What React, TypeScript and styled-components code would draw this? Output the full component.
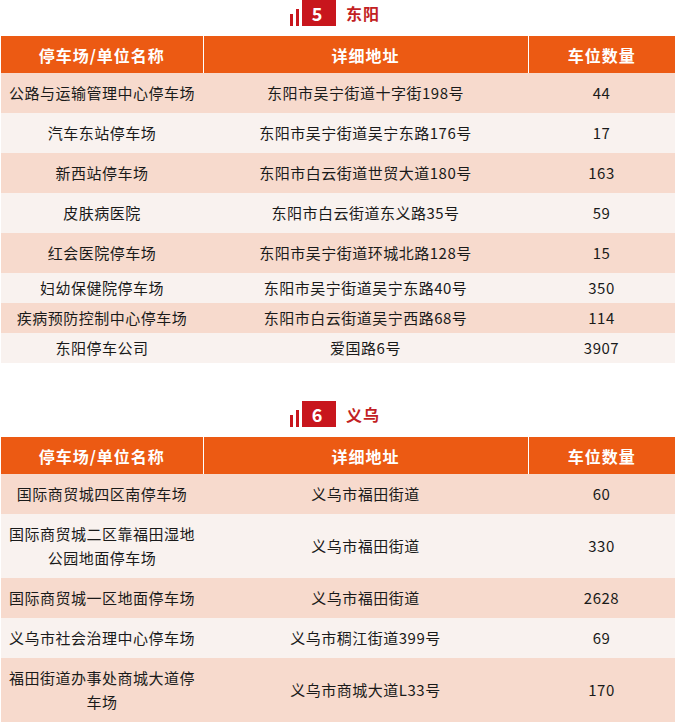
import React from "react";
import styled, { createGlobalStyle } from "styled-components";

const GlobalStyle = createGlobalStyle`
  html, body {
    margin: 0;
    padding: 0;
    background: #ffffff;
  }
  body {
    font-family: "Noto Sans CJK SC", "Noto Sans", sans-serif;
    color: #1a1a1a;
  }
`;

const Page = styled.div`
  width: 675px;
  padding-left: 1px;
  box-sizing: border-box;
`;

const Section = styled.section`
  display: flex;
  flex-direction: column;
  margin-bottom: 38px;
`;

const TitleRow = styled.div`
  display: flex;
  align-items: flex-end;
  justify-content: center;
  height: 26px;
  margin-bottom: 10px;
  padding-right: 6px;
`;

const Bars = styled.div`
  display: flex;
  align-items: flex-end;
  gap: 3px;
  height: 26px;
  margin-right: 3px;
`;

const Bar = styled.span<{ $h: number }>`
  display: block;
  width: 3px;
  height: ${(p) => p.$h}px;
  background: #c8161d;
`;

const NumBox = styled.div`
  width: 34px;
  height: 26px;
  background: #c8161d;
  color: #ffffff;
  font-weight: 700;
  font-size: 18px;
  line-height: 26px;
  text-align: center;
  padding-right: 4px;
  box-sizing: border-box;
`;

const TitleText = styled.div`
  margin-left: 10px;
  color: #c21f24;
  font-weight: 700;
  font-size: 16px;
  letter-spacing: 1px;
  line-height: 26px;
`;

const Table = styled.table`
  width: 674px;
  border-collapse: collapse;
  table-layout: fixed;
`;

const HeadCell = styled.th`
  background: #ec5a13;
  color: #ffffff;
  font-weight: 700;
  font-size: 16px;
  letter-spacing: 1px;
  height: 37px;
  padding: 0 6px;
  text-align: center;
  border-right: 1px solid #ffffff;
  &:last-child {
    border-right: none;
  }
`;

const Row = styled.tr<{ $alt: boolean }>`
  background: ${(p) => (p.$alt ? "#f9f2ef" : "#f7dacd")};
`;

const Cell = styled.td<{ $compact?: boolean }>`
  font-size: 15px;
  letter-spacing: 0.5px;
  line-height: 24px;
  padding: ${(p) => (p.$compact ? "3px 6px" : "8px 6px")};
  text-align: center;
  color: #1a1a1a;
  word-break: break-all;
`;

type Lot = { name: string; addr: string; count: string; compact?: boolean };

const dongyang: Lot[] = [
  { name: "公路与运输管理中心停车场", addr: "东阳市吴宁街道十字街198号", count: "44" },
  { name: "汽车东站停车场", addr: "东阳市吴宁街道吴宁东路176号", count: "17" },
  { name: "新西站停车场", addr: "东阳市白云街道世贸大道180号", count: "163" },
  { name: "皮肤病医院", addr: "东阳市白云街道东义路35号", count: "59" },
  { name: "红会医院停车场", addr: "东阳市吴宁街道环城北路128号", count: "15" },
  { name: "妇幼保健院停车场", addr: "东阳市吴宁街道吴宁东路40号", count: "350", compact: true },
  { name: "疾病预防控制中心停车场", addr: "东阳市白云街道吴宁西路68号", count: "114", compact: true },
  { name: "东阳停车公司", addr: "爱国路6号", count: "3907", compact: true },
];

const yiwu: Lot[] = [
  { name: "国际商贸城四区南停车场", addr: "义乌市福田街道", count: "60" },
  { name: "国际商贸城二区靠福田湿地公园地面停车场", addr: "义乌市福田街道", count: "330" },
  { name: "国际商贸城一区地面停车场", addr: "义乌市福田街道", count: "2628" },
  { name: "义乌市社会治理中心停车场", addr: "义乌市稠江街道399号", count: "69" },
  { name: "福田街道办事处商城大道停车场", addr: "义乌市商城大道L33号", count: "170" },
];

const CityTable = ({ num, city, lots }: { num: string; city: string; lots: Lot[] }) => (
  <Section>
    <TitleRow>
      <Bars>
        <Bar $h={12} />
        <Bar $h={17} />
      </Bars>
      <NumBox>{num}</NumBox>
      <TitleText>{city}</TitleText>
    </TitleRow>
    <Table>
      <colgroup>
        <col style={{ width: 202 }} />
        <col style={{ width: 325 }} />
        <col style={{ width: 147 }} />
      </colgroup>
      <thead>
        <tr>
          <HeadCell>停车场/单位名称</HeadCell>
          <HeadCell>详细地址</HeadCell>
          <HeadCell>车位数量</HeadCell>
        </tr>
      </thead>
      <tbody>
        {lots.map((lot, i) => (
          <Row key={lot.name} $alt={i % 2 === 1}>
            <Cell $compact={lot.compact}>{lot.name}</Cell>
            <Cell $compact={lot.compact}>{lot.addr}</Cell>
            <Cell $compact={lot.compact}>{lot.count}</Cell>
          </Row>
        ))}
      </tbody>
    </Table>
  </Section>
);

export default function App() {
  return (
    <>
      <GlobalStyle />
      <Page>
        <CityTable num="5" city="东阳" lots={dongyang} />
        <CityTable num="6" city="义乌" lots={yiwu} />
      </Page>
    </>
  );
}
